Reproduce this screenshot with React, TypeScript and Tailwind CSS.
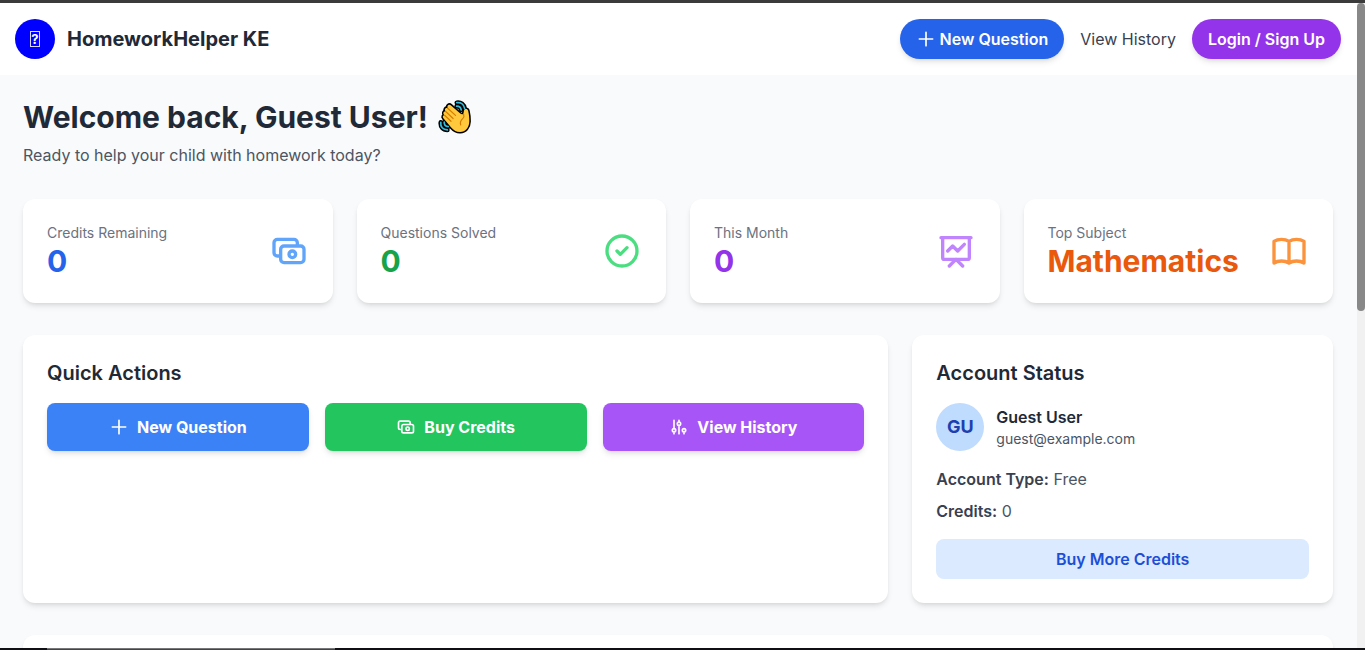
import type { ReactNode } from "react";

const PATHS = {
  plus: "M12 4v16m8-8H4",
  cash: "M17 9V7a2 2 0 00-2-2H5a2 2 0 00-2 2v6a2 2 0 002 2h2m2 4h10a2 2 0 002-2v-6a2 2 0 00-2-2H9a2 2 0 00-2 2v6a2 2 0 002 2zm7-5a2 2 0 11-4 0 2 2 0 014 0z",
  check: "M9 12l2 2 4-4m6 2a9 9 0 11-18 0 9 9 0 0118 0z",
  chart: "M7 12l3-3 3 3 4-4M8 21l4-4 4 4M3 4h18M4 4h16v12a1 1 0 01-1 1H5a1 1 0 01-1-1V4z",
  book: "M12 6.253v13m0-13C10.832 5.477 9.246 5 7.5 5S4.168 5.477 3 6.253v13C4.168 18.477 5.754 18 7.5 18s3.332.477 4.5 1.253m0-13C13.168 5.477 14.754 5 16.5 5c1.747 0 3.332.477 4.5 1.253v13C19.832 18.477 18.247 18 16.5 18c-1.746 0-3.332.477-4.5 1.253",
  sliders:
    "M12 6V4m0 2a2 2 0 100 4m0-4a2 2 0 110 4m-6 8a2 2 0 100-4m0 4a2 2 0 110-4m0 4v2m0-6V4m6 6v10m6-2a2 2 0 100-4m0 4a2 2 0 110-4m0 4v2",
};

function Icon({ name, className }: { name: keyof typeof PATHS; className: string }) {
  return (
    <svg className={className} fill="none" viewBox="0 0 24 24" stroke="currentColor" strokeWidth={2} strokeLinecap="round" strokeLinejoin="round">
      <path d={PATHS[name]} />
    </svg>
  );
}

const HAND =
  "M5.600 19.500C4 17.600 5.200 16.200 6.600 16.300C4.400 14.300 5.600 12 7.700 12.500C5.900 10.300 7.700 8.300 9.700 9.200C8.600 6.600 11 4.700 13 6.400L22.300 14.600C23.800 15.900 25.400 15.500 25.600 13.800L25.900 11.900C26.300 9.500 29.600 9.400 30.200 12C31 15.300 31.400 19 31.300 22.500C31.100 28.700 27.500 32.800 22.200 33C18.200 33.100 15.600 31.200 13.200 28.500Z";
const MOTION = "M18.800 3.700C23 3.100 26 5.600 26.700 9.600M18.600 7.200C21.200 7.200 22.800 8.500 23.200 10.800M2.800 23.300C2.200 27.800 4.900 30.900 9.400 30.900M6.200 23.200C6.100 25.800 7.600 27.400 10.200 27.700";

function WavingHand() {
  return (
    <svg className="ml-[10px] h-9 w-9 shrink-0" viewBox="0 0 36 36" fill="none" strokeLinecap="round" strokeLinejoin="round">
      <path d={MOTION} stroke="#000" strokeWidth="4.600" />
      <path d={HAND} fill="#000" stroke="#000" strokeWidth="3.200" />
      <path d={MOTION} stroke="#35bbdc" strokeWidth="1.700" />
      <path d={HAND} fill="#ffc83d" />
      <path d="M9.700 9.200l7.800 7.200M7.700 12.500l7.400 7M6.600 16.300l6.400 6M25.600 15.300c.6 1.800.3 3.200-.7 4.100-2.100 1.900-3.200 3.800-2.200 6.600" stroke="#d67d00" strokeWidth="1.200" />
    </svg>
  );
}

function StatCard({ label, value, icon, valueClass, iconClass }: { label: string; value: string; icon: keyof typeof PATHS; valueClass: string; iconClass: string }) {
  return (
    <div className="flex items-center justify-between rounded-xl bg-white p-6 shadow-md">
      <div>
        <p className="text-sm text-[#6b7280]">{label}</p>
        <p className={`text-3xl font-bold ${valueClass}`}>{value}</p>
      </div>
      <Icon name={icon} className={`h-10 w-10 shrink-0 ${iconClass}`} />
    </div>
  );
}

function ActionButton({ icon, className, children }: { icon: keyof typeof PATHS; className: string; children: ReactNode }) {
  return (
    <button className={`flex h-12 items-center justify-center rounded-lg font-bold text-white shadow-md ${className}`}>
      <Icon name={icon} className="mr-2 h-5 w-5" />
      {children}
    </button>
  );
}

export default function App() {
  return (
    <div className="flex h-[650px] w-full flex-col overflow-hidden bg-[#f9fafb] font-['Inter',sans-serif] text-[#1f2937]">
      <div className="h-[3px] shrink-0 bg-[#3b3b3b]" />
      <div className="flex min-h-0 flex-1">
        <div className="min-w-0 flex-1 overflow-hidden">
          <header className="flex h-[72px] items-center justify-between bg-white pr-4 pl-[15px]">
            <div className="flex items-center">
              <div className="mr-3 flex h-10 w-10 items-center justify-center rounded-full bg-[#0000ff] text-white">
                <div className="flex h-[16px] w-[10px] items-center justify-center border border-[#d8d8ff] text-[13px] leading-none font-bold">?</div>
              </div>
              <span className="text-xl font-bold">HomeworkHelper KE</span>
            </div>
            <nav className="flex items-center gap-4">
              <button className="flex h-10 items-center rounded-full bg-[#2563eb] px-4 font-semibold text-white shadow-md">
                <Icon name="plus" className="mr-1 h-5 w-5" />
                New Question
              </button>
              <a className="text-[#374151]">View History</a>
              <button className="h-10 rounded-full bg-[#9333ea] px-4 font-semibold text-white shadow-md">Login / Sign Up</button>
            </nav>
          </header>

          <main className="py-6 pr-6 pl-[23px]">
            <section className="mb-8">
              <h1 className="flex h-9 items-center text-3xl font-bold">
                Welcome back, Guest User!
                <WavingHand />
              </h1>
              <p className="mt-2 text-[#4b5563]">Ready to help your child with homework today?</p>
            </section>

            <section className="mb-8 grid grid-cols-4 gap-6">
              <StatCard label="Credits Remaining" value="0" icon="cash" valueClass="text-[#2563eb]" iconClass="text-[#60a5fa]" />
              <StatCard label="Questions Solved" value="0" icon="check" valueClass="text-[#16a34a]" iconClass="text-[#4ade80]" />
              <StatCard label="This Month" value="0" icon="chart" valueClass="text-[#9333ea]" iconClass="text-[#c084fc]" />
              <StatCard label="Top Subject" value="Mathematics" icon="book" valueClass="text-[#ea580c]" iconClass="text-[#fb923c]" />
            </section>

            <section className="mb-8 grid grid-cols-3 gap-6">
              <div className="col-span-2 rounded-xl bg-white p-6 shadow-md">
                <h2 className="mb-4 text-xl font-semibold">Quick Actions</h2>
                <div className="grid grid-cols-3 gap-4">
                  <ActionButton icon="plus" className="bg-[#3b82f6]">New Question</ActionButton>
                  <ActionButton icon="cash" className="bg-[#22c55e]">Buy Credits</ActionButton>
                  <ActionButton icon="sliders" className="bg-[#a855f7]">View History</ActionButton>
                </div>
              </div>
              <div className="rounded-xl bg-white p-6 shadow-md">
                <h2 className="mb-4 text-xl font-semibold">Account Status</h2>
                <div className="mb-4 flex items-center">
                  <div className="mr-3 flex h-12 w-12 items-center justify-center rounded-full bg-[#bfdbfe] text-lg font-bold text-[#1e40af]">GU</div>
                  <div>
                    <p className="font-semibold">Guest User</p>
                    <p className="text-sm text-[#4b5563]">guest@example.com</p>
                  </div>
                </div>
                <p className="mb-2 text-[#4b5563]"><span className="font-semibold text-[#374151]">Account Type:</span> Free</p>
                <p className="mb-4 text-[#4b5563]"><span className="font-semibold text-[#374151]">Credits:</span> 0</p>
                <button className="h-10 w-full rounded-lg bg-[#dbeafe] font-semibold text-[#1d4ed8]">Buy More Credits</button>
              </div>
            </section>

            <section className="h-40 rounded-xl bg-white shadow-md" />
          </main>
        </div>
        <div className="w-2 shrink-0 bg-[#f1f1f1]">
          <div className="h-[308px] rounded-full bg-[#888888]" />
        </div>
      </div>
      <div className="flex h-[2px] shrink-0 bg-[#101014]">
        <div className="ml-[47px] w-[288px] border-t border-[#77777a] bg-[#444447]" />
      </div>
    </div>
  );
}
